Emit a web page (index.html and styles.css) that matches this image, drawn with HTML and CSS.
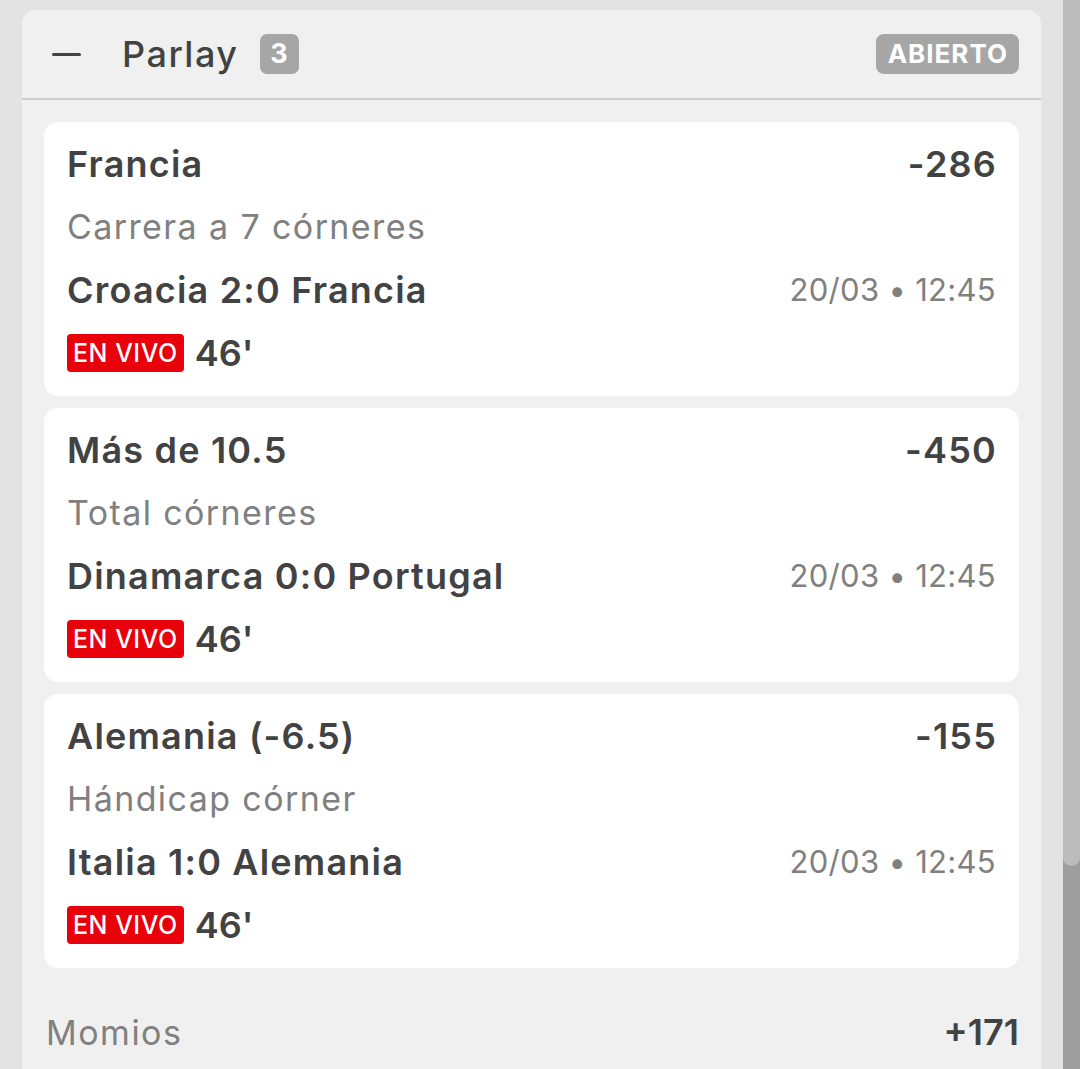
FILE: index.html
```html
<!DOCTYPE html>
<html lang="es">
<head>
  <meta charset="UTF-8" />
  <title>Parlay</title>
  <link rel="stylesheet" href="styles.css">
</head>
<body>

  <div class="page">
    <div class="panel">
      <div class="panel-head">
        <span class="collapse"></span>
        <span class="panel-title">Parlay</span>
        <span class="count">3</span>
        <span class="status">ABIERTO</span>
      </div>

      <div class="legs">
        <div class="leg">
          <div class="row">
            <span class="pick">Francia</span>
            <span class="odds">-286</span>
          </div>
          <div class="row market">Carrera a 7 córneres</div>
          <div class="row">
            <span class="match">Croacia 2:0 Francia</span>
            <span class="date">20/03 • 12:45</span>
          </div>
          <div class="row live">
            <span class="live-tag">EN VIVO</span>
            <span class="minute">46'</span>
          </div>
        </div>

        <div class="leg">
          <div class="row">
            <span class="pick">Más de 10.5</span>
            <span class="odds">-450</span>
          </div>
          <div class="row market">Total córneres</div>
          <div class="row">
            <span class="match">Dinamarca 0:0 Portugal</span>
            <span class="date">20/03 • 12:45</span>
          </div>
          <div class="row live">
            <span class="live-tag">EN VIVO</span>
            <span class="minute">46'</span>
          </div>
        </div>

        <div class="leg">
          <div class="row">
            <span class="pick">Alemania (-6.5)</span>
            <span class="odds">-155</span>
          </div>
          <div class="row market">Hándicap córner</div>
          <div class="row">
            <span class="match">Italia 1:0 Alemania</span>
            <span class="date">20/03 • 12:45</span>
          </div>
          <div class="row live">
            <span class="live-tag">EN VIVO</span>
            <span class="minute">46'</span>
          </div>
        </div>
      </div>

      <div class="total">
        <span class="total-label">Momios</span>
        <span class="total-odds">+171</span>
      </div>
    </div>

    <div class="scrollbar">
      <div class="thumb"></div>
    </div>
  </div>

</body>
</html>
```

FILE: styles.css
```css
html, body {
  margin: 0;
  height: 100%;
}
body {
  font-family: Inter, Roboto, "Noto Sans", sans-serif;
  background: #e3e3e3;
  color: #424242;
  overflow: hidden;
}
.page {
  display: flex;
  height: 1069px;
}
.panel {
  width: 1019px;
  margin: 10px 0 0 22px;
  background: #f0f0f0;
  border-radius: 14px 14px 0 0;
}
.panel-head {
  display: flex;
  align-items: center;
  height: 88px;
  padding: 0 22px 0 30px;
  border-bottom: 2px solid #cfcfcf;
}
.collapse {
  width: 29px;
  height: 3px;
  background: #424242;
  border-radius: 2px;
}
.panel-title {
  font-size: 36px;
  font-weight: 500;
  letter-spacing: 1.5px;
  margin-left: 41px;
}
.count {
  margin-left: 21px;
  width: 39px;
  height: 40px;
  line-height: 40px;
  text-align: center;
  background: #a6a6a6;
  color: white;
  font-size: 27px;
  font-weight: 700;
  border-radius: 7px;
}
.status {
  margin-left: auto;
  padding: 0 11px 0 12px;
  height: 40px;
  line-height: 40px;
  background: #a6a6a6;
  color: white;
  font-size: 26px;
  font-weight: 700;
  letter-spacing: 1px;
  border-radius: 8px;
}
.legs {
  display: flex;
  flex-direction: column;
  gap: 12px;
  padding: 22px 22px 0;
}
.leg {
  background: white;
  border-radius: 14px;
  height: 274px;
  box-sizing: border-box;
  padding: 10px 23px 0 23px;
}
.row {
  display: flex;
  justify-content: space-between;
  align-items: center;
  height: 63px;
}
.pick, .odds, .match, .minute {
  font-size: 36px;
  font-weight: 600;
  letter-spacing: 1.2px;
}
.odds {
  margin-right: -1px;
}
.market {
  font-size: 34px;
  color: #808080;
  letter-spacing: 1.4px;
}
.date {
  font-size: 31px;
  color: #808080;
  letter-spacing: 0.3px;
}
.row.live {
  justify-content: flex-start;
}
.live-tag {
  background: #e8000b;
  color: white;
  font-size: 25px;
  font-weight: 500;
  letter-spacing: 0.5px;
  height: 38px;
  line-height: 38px;
  padding: 0 6px;
  border-radius: 4px;
}
.row .minute {
  margin-left: 11px;
  letter-spacing: 0;
}
.total {
  display: flex;
  justify-content: space-between;
  align-items: center;
  padding: 42px 22px 0 24px;
}
.total-label {
  font-size: 34px;
  color: #808080;
  letter-spacing: 1.5px;
}
.total-odds {
  font-size: 36px;
  font-weight: 600;
}
.scrollbar {
  margin-left: 22px;
  width: 17px;
  background: #9e9e9e;
}
.thumb {
  height: 866px;
  background: #bcbcbc;
  border-radius: 0 0 9px 9px;
}
```
